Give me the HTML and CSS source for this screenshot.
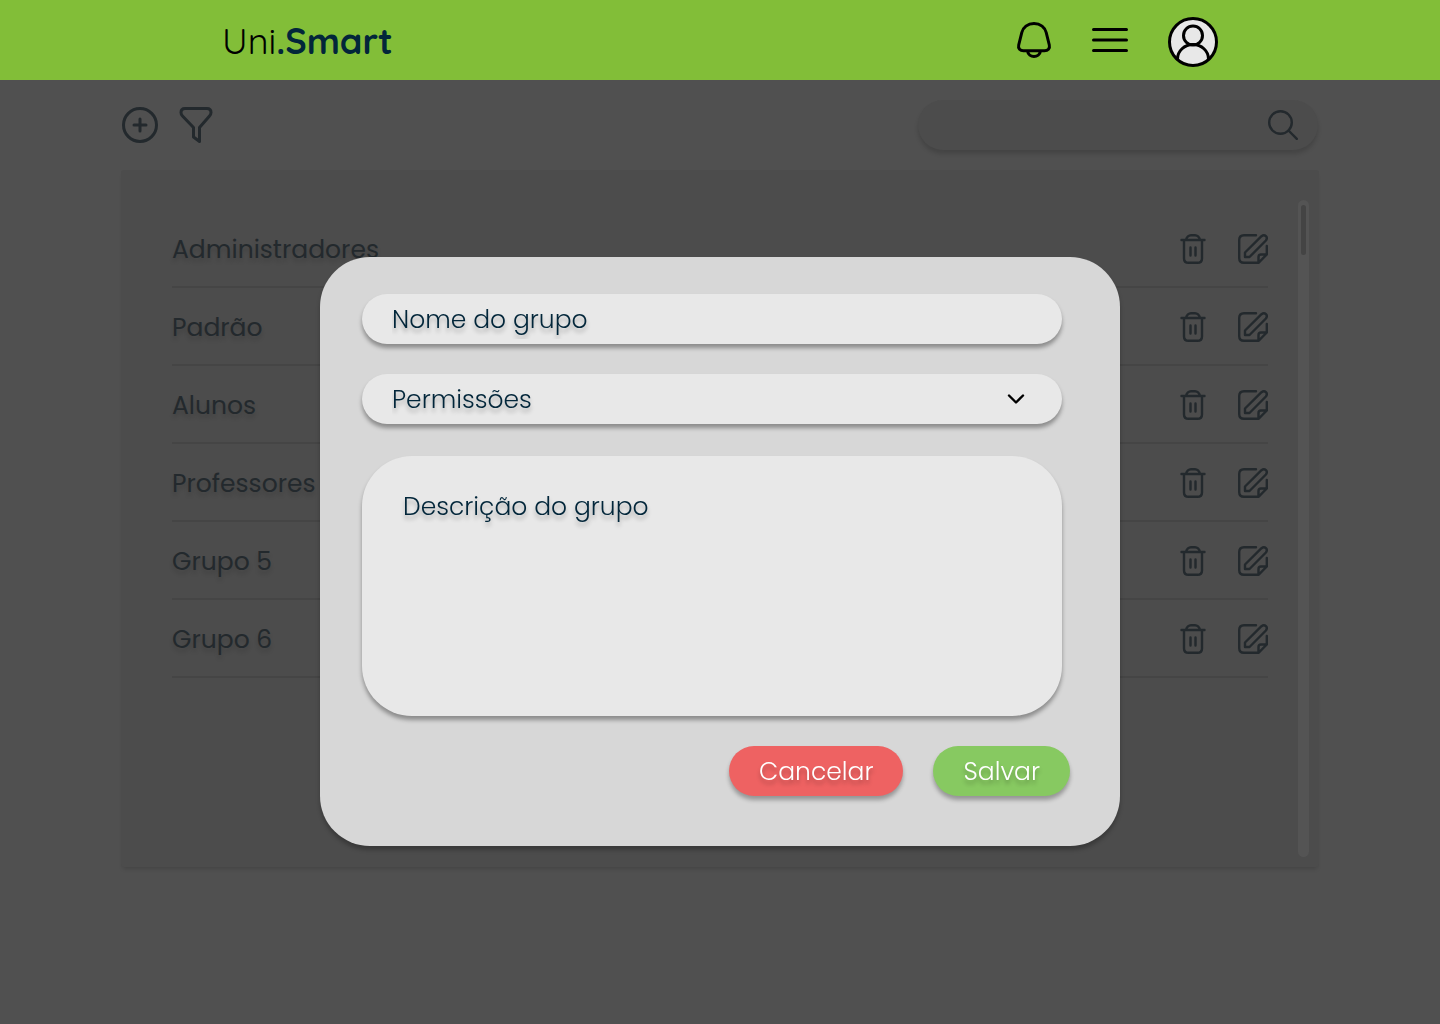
FILE: index.html
```
<!DOCTYPE html>
<html lang="pt-BR">
<head>
<meta charset="utf-8">
<meta name="viewport" content="width=device-width, initial-scale=1">
<title>Uni.Smart</title>
<link rel="stylesheet" href="styles.css">
</head>
<body>
<svg class="sprite" aria-hidden="true">
  <symbol id="trash" viewBox="0 0 26 30">
    <path stroke-width="2.4" d="M1.500 6H24.500M6 6C6.500 3 9 1.200 11 1.200H15C17 1.200 19.500 3 20 6M4 6V24.500Q4 28.800 8.500 28.800H17.500Q22 28.800 22 24.500V6M10.500 13.500V21.500M15.500 13.500V21.500"/>
  </symbol>
  <symbol id="edit" viewBox="1 1 30 30">
    <g stroke-width="2.4">
      <path d="M19 2.200H7Q2.200 2.200 2.200 7V25Q2.200 29.800 7 29.800H21.500L29.800 21.500V13M21.500 29.800V24Q21.500 21.500 24 21.500H29.800"/>
      <path d="M8 24V19.500L24.500 3.200Q27 1.300 28.900 3.200Q30.700 5 28.900 7.500L12.500 24Z"/>
    </g>
  </symbol>
</svg>

<header class="topbar">
  <a class="brand" href="#"><span class="brand-light">Uni</span><span class="brand-bold">.Smart</span></a>
  <nav class="topbar-actions" aria-label="Principal">
    <button class="icon-button" type="button" aria-label="Notificações">
      <svg class="icon" width="36" height="36" viewBox="0 0 36 36"><path d="M18 1.500C11.500 1.500 7 5.500 5.800 10.500L2.700 23C1.800 26.500 4.200 28.700 7.500 28.700H28.500C31.800 28.700 34.200 26.500 33.300 23L30.200 10.500C29 5.500 24.500 1.500 18 1.500ZM11.500 29C12 32.500 15 34.500 18 34.500C21 34.500 24 32.500 24.500 29"/></svg>
    </button>
    <button class="icon-button" type="button" aria-label="Menu">
      <svg class="icon" width="36" height="26" viewBox="0 0 36 26"><path d="M1.500 2.500H34.500M1.500 13H34.500M1.500 23.500H34.500"/></svg>
    </button>
    <button class="icon-button profile" type="button" aria-label="Perfil">
      <svg class="icon" width="50" height="50" viewBox="0 0 50 50"><circle class="avatar-disc" cx="25" cy="25" r="23.500"/><circle cx="25" cy="18.500" r="9.500"/><path d="M9.500 42A15.500 14.500 0 0 1 40.500 42"/></svg>
    </button>
  </nav>
</header>

<main class="page">
  <div class="toolbar">
    <div class="toolbar-actions">
      <button class="icon-button" type="button" aria-label="Adicionar grupo">
        <svg class="icon" width="36" height="36" viewBox="0 0 36 36"><circle cx="18" cy="18" r="16.500"/><path d="M18 12V24M12 18H24"/></svg>
      </button>
      <button class="icon-button" type="button" aria-label="Filtrar">
        <svg class="icon" width="36" height="36" viewBox="0 0 36 36"><path d="M7 1.500H29Q33 1.500 33 5.500Q33 7.500 31.500 9L21.500 20.500V34.500L15.500 30V20.500L4.500 9Q3 7.500 3 5.500Q3 1.500 7 1.500Z"/></svg>
      </button>
    </div>
    <div class="search">
      <input class="search-input" type="search" aria-label="Buscar grupo">
      <button class="icon-button" type="button" aria-label="Buscar">
        <svg class="icon" width="30" height="30" viewBox="0 0 30 30"><g stroke-width="2.4"><circle cx="12.500" cy="12.500" r="11.300"/><path d="M20.500 20.500L28.800 28.800"/></g></svg>
      </button>
    </div>
  </div>

  <section class="panel" aria-label="Grupos">
    <ul class="groups">
      <li class="group"><span class="group-name">Administradores</span><button class="icon-button" type="button" aria-label="Excluir Administradores"><svg class="icon trash"><use href="#trash"/></svg></button><button class="icon-button" type="button" aria-label="Editar Administradores"><svg class="icon edit"><use href="#edit"/></svg></button></li>
      <li class="group"><span class="group-name">Padrão</span><button class="icon-button" type="button" aria-label="Excluir Padrão"><svg class="icon trash"><use href="#trash"/></svg></button><button class="icon-button" type="button" aria-label="Editar Padrão"><svg class="icon edit"><use href="#edit"/></svg></button></li>
      <li class="group"><span class="group-name">Alunos</span><button class="icon-button" type="button" aria-label="Excluir Alunos"><svg class="icon trash"><use href="#trash"/></svg></button><button class="icon-button" type="button" aria-label="Editar Alunos"><svg class="icon edit"><use href="#edit"/></svg></button></li>
      <li class="group"><span class="group-name">Professores</span><button class="icon-button" type="button" aria-label="Excluir Professores"><svg class="icon trash"><use href="#trash"/></svg></button><button class="icon-button" type="button" aria-label="Editar Professores"><svg class="icon edit"><use href="#edit"/></svg></button></li>
      <li class="group"><span class="group-name">Grupo 5</span><button class="icon-button" type="button" aria-label="Excluir Grupo 5"><svg class="icon trash"><use href="#trash"/></svg></button><button class="icon-button" type="button" aria-label="Editar Grupo 5"><svg class="icon edit"><use href="#edit"/></svg></button></li>
      <li class="group"><span class="group-name">Grupo 6</span><button class="icon-button" type="button" aria-label="Excluir Grupo 6"><svg class="icon trash"><use href="#trash"/></svg></button><button class="icon-button" type="button" aria-label="Editar Grupo 6"><svg class="icon edit"><use href="#edit"/></svg></button></li>
    </ul>
    <div class="scrollbar"><div class="scrollbar-thumb"></div></div>
  </section>
</main>

<div class="overlay">
  <form class="modal" role="dialog" aria-label="Novo grupo">
    <input class="field" type="text" aria-label="Nome do grupo" placeholder="Nome do grupo">
    <div class="select-wrap">
      <select class="field select" aria-label="Permissões"><option>Permissões</option></select>
      <svg class="icon chevron" width="20" height="12" viewBox="0 0 20 12"><path stroke-width="2.4" d="M3 2.500L10 9.500L17 2.500"/></svg>
    </div>
    <textarea class="field description" aria-label="Descrição do grupo" placeholder="Descrição do grupo"></textarea>
    <div class="modal-actions">
      <button class="button button-cancel" type="button">Cancelar</button>
      <button class="button button-save" type="submit">Salvar</button>
    </div>
  </form>
</div>
</body>
</html>
```
FILE: styles.css
```
* {
  box-sizing: border-box;
}

body {
  margin: 0;
  min-height: 100vh;
  background: #505050;
  color: #23292d;
  font-family: Poppins, Inter, "Open Sans", sans-serif;
  font-size: 25px;
  font-weight: 300;
}

.sprite {
  display: none;
}

.icon {
  display: block;
  fill: none;
  stroke: currentColor;
  stroke-width: 3;
  stroke-linecap: round;
  stroke-linejoin: round;
}

.icon-button {
  padding: 0;
  border: 0;
  background: none;
  color: inherit;
  cursor: pointer;
}

.topbar {
  display: flex;
  align-items: center;
  justify-content: space-between;
  height: 80px;
  padding: 0 222px;
  background: #82be38;
  color: #000;
}

.brand {
  padding-top: 2px;
  color: inherit;
  font-family: Quicksand, Poppins, Inter, sans-serif;
  font-size: 36px;
  line-height: 40px;
  text-decoration: none;
}

.brand-light {
  font-weight: 400;
}

.brand-bold {
  color: #02263a;
  font-weight: 700;
}

.topbar-actions {
  display: flex;
  align-items: center;
  gap: 40px;
}

.profile {
  margin-top: 4px;
}

.avatar-disc {
  fill: #e8e8e8;
}

.page {
  display: flex;
  flex-direction: column;
  gap: 20px;
  min-height: calc(100vh - 80px);
  padding: 20px 121px 157px;
}

.toolbar {
  display: flex;
  align-items: center;
  justify-content: space-between;
  padding: 0 1px;
}

.toolbar-actions {
  display: flex;
  gap: 20px;
}

.search {
  display: flex;
  align-items: center;
  width: 400px;
  height: 50px;
  padding: 0 20px 0 30px;
  border-radius: 25px;
  background: #4c4c4c;
  box-shadow: 0 4px 4px rgba(0, 0, 0, 0.15);
}

.search-input {
  flex: 1;
  min-width: 0;
  border: 0;
  outline: 0;
  background: none;
  color: inherit;
  font: inherit;
}

.panel {
  display: flex;
  flex: 1;
  gap: 30px;
  padding: 30px 10px 10px 51px;
  border-radius: 3px;
  background: #4c4c4c;
  box-shadow: 0 4px 4px -2px rgba(0, 0, 0, 0.15);
}

.groups {
  flex: 1;
  margin: 0;
  padding: 10px 0 0;
  list-style: none;
}

.group {
  display: flex;
  align-items: center;
  gap: 32px;
  height: 78px;
  padding-top: 2px;
  border-bottom: 2px solid #454545;
}

.group-name {
  flex: 1;
  padding-top: 2px;
  font-weight: 400;
  text-shadow: 0 4px 4px rgba(0, 0, 0, 0.15);
}

.trash {
  width: 26px;
  height: 30px;
}

.edit {
  width: 30px;
  height: 30px;
}

.scrollbar {
  width: 11px;
  padding: 5px 3px;
  border-radius: 6px;
  background: #545454;
}

.scrollbar-thumb {
  height: 50px;
  border-radius: 3px;
  background: #444;
}

.overlay {
  position: fixed;
  inset: 80px 0 0;
  display: flex;
  align-items: center;
  justify-content: center;
  padding-bottom: 1px;
}

.modal {
  display: flex;
  flex-direction: column;
  gap: 30px;
  width: 800px;
  max-width: 100%;
  padding: 37px 50px 50px 42px;
  border-radius: 50px;
  background: #d7d7d7;
  box-shadow: 0 4px 4px rgba(0, 0, 0, 0.25);
}

.field {
  display: block;
  width: calc(100% - 8px);
  height: 50px;
  margin: 0;
  padding: 2px 30px 0;
  border: 0;
  border-radius: 25px;
  outline: 0;
  background: #e8e8e8;
  box-shadow: 0 4px 4px rgba(0, 0, 0, 0.35);
  color: #02263a;
  font: inherit;
  text-shadow: 0 4px 4px rgba(0, 0, 0, 0.25);
}

.field::placeholder {
  color: inherit;
  opacity: 1;
}

.select-wrap {
  position: relative;
}

.select {
  appearance: none;
  padding-top: 0;
}

.chevron {
  position: absolute;
  top: 19px;
  right: 44px;
  color: #000;
  pointer-events: none;
}

.description {
  height: 260px;
  margin-top: 2px;
  padding: 35px 41px;
  border-radius: 50px;
  line-height: 32px;
  resize: none;
}

.modal-actions {
  display: flex;
  justify-content: flex-end;
  gap: 30px;
}

.button {
  height: 50px;
  padding: 2px 30px 0;
  border: 0;
  border-radius: 25px;
  box-shadow: 0 4px 4px rgba(0, 0, 0, 0.3);
  color: #fff;
  font: inherit;
  text-shadow: 0 4px 4px rgba(0, 0, 0, 0.25);
  cursor: pointer;
}

.button-cancel {
  background: #ee6262;
}

.button-save {
  background: #87c961;
}
```
